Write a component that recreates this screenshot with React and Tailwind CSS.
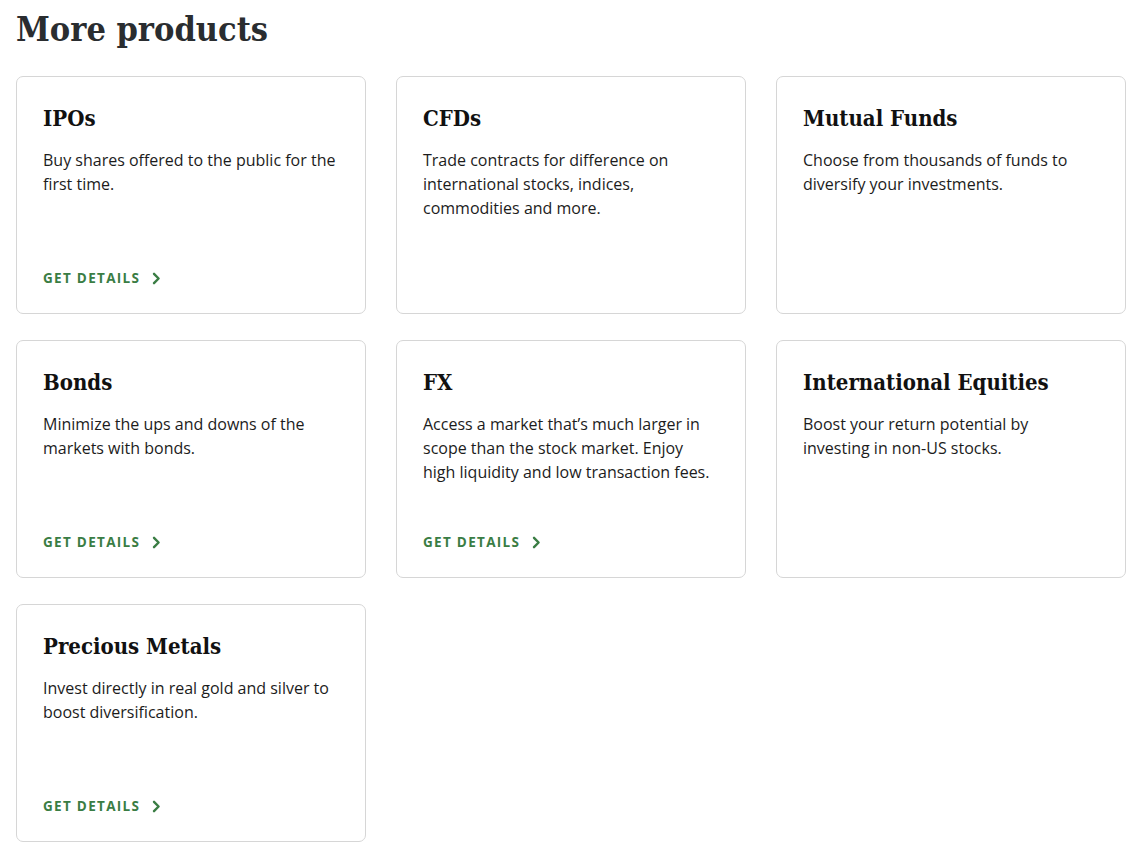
import React from "react";

const products = [
  { title: "IPOs", text: "Buy shares offered to the public for the first time.", link: true },
  { title: "CFDs", text: "Trade contracts for difference on international stocks, indices, commodities and more.", link: false },
  { title: "Mutual Funds", text: "Choose from thousands of funds to diversify your investments.", link: false },
  { title: "Bonds", text: "Minimize the ups and downs of the markets with bonds.", link: true },
  { title: "FX", text: "Access a market that\u2019s much larger in scope than the stock market. Enjoy high liquidity and low transaction fees.", link: true },
  { title: "International Equities", text: "Boost your return potential by investing in non-US stocks.", link: false },
  { title: "Precious Metals", text: "Invest directly in real gold and silver to boost diversification.", link: true },
];

function Chevron() {
  return (
    <svg width="9" height="13" viewBox="0 0 9 13" fill="none" className="ml-[12px]">
      <path d="M2 1.8 L6.6 6.5 L2 11.2" stroke="#3a7d44" strokeWidth="2.4" strokeLinecap="round" strokeLinejoin="round" />
    </svg>
  );
}

function Card({ title, text, link }) {
  return (
    <div className="flex flex-col h-[238px] rounded-[7px] border border-[#d6d6d6] bg-white px-[26px] pt-[27px] pb-[25px]">
      <h3 className="text-[22px] leading-[28px] font-bold text-[#111] font-['DejaVu_Serif_Condensed','DejaVu_Serif',serif]">
        {title}
      </h3>
      <p className="mt-[16px] text-[16px] leading-[24px] text-[#1c1c1c] font-['Open_Sans',sans-serif]">
        {text}
      </p>
      {link && (
        <a className="mt-auto flex items-center text-[13.5px] leading-[20px] font-bold tracking-[1.3px] text-[#3a7d44] font-['Open_Sans',sans-serif]">
          GET DETAILS
          <Chevron />
        </a>
      )}
    </div>
  );
}

export default function App() {
  return (
    <div className="bg-white min-h-screen pl-4 pt-[6px]">
      <h2 className="text-[34px] leading-[46px] font-bold text-[#2a2d30] font-['DejaVu_Serif_Condensed','DejaVu_Serif',serif]">
        More products
      </h2>
      <div className="mt-[24px] grid grid-cols-[repeat(3,350px)] gap-x-[30px] gap-y-[26px]">
        {products.map((p) => (
          <Card key={p.title} {...p} />
        ))}
      </div>
    </div>
  );
}
